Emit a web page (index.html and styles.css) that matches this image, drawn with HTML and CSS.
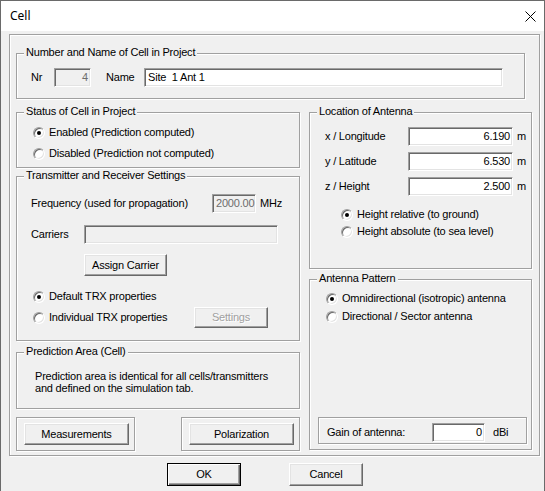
FILE: index.html
```html
<!DOCTYPE html>
<html>
<head>
<meta charset="utf-8">
<title>Cell</title>
<link rel="stylesheet" href="styles.css">
</head>
<body>
<div class="window">
  <div class="titlebar">
    <span class="title">Cell</span>
    <svg class="close" width="11" height="11" viewBox="0 0 11 11"><path d="M0.5 0.5 L10.5 10.5 M10.5 0.5 L0.5 10.5" stroke="#000" stroke-width="1" fill="none"/></svg>
  </div>
  <div class="client">
    <div class="frame">
      <div class="group g-name">
        <div class="legend">Number and Name of Cell in Project</div>
        <div class="row name-row">
          <span class="lbl lbl-nr">Nr</span>
          <div class="edit disabled num w-nr">4</div>
          <span class="lbl lbl-name">Name</span>
          <div class="edit w-name">Site  1 Ant 1</div>
        </div>
      </div>
      <div class="columns">
        <div class="col col-left">
          <div class="group g-status">
            <div class="legend">Status of Cell in Project</div>
            <div class="radio-row first"><span class="radio checked"></span><span class="rtext">Enabled (Prediction computed)</span></div>
            <div class="radio-row second"><span class="radio"></span><span class="rtext">Disabled (Prediction not computed)</span></div>
          </div>
          <div class="group g-trx">
            <div class="legend">Transmitter and Receiver Settings</div>
            <div class="row freq-row">
              <span class="lbl lbl-freq">Frequency (used for propagation)</span>
              <div class="edit disabled num w-freq">2000.00</div>
              <span class="unit unit-mhz">MHz</span>
            </div>
            <div class="row carriers-row">
              <span class="lbl lbl-carriers">Carriers</span>
              <div class="edit disabled w-carriers"></div>
            </div>
            <div class="btn btn-assign">Assign Carrier</div>
            <div class="radio-row trx-default"><span class="radio checked"></span><span class="rtext">Default TRX properties</span></div>
            <div class="radio-row trx-indiv">
              <span class="radio"></span><span class="rtext rtext-indiv">Individual TRX properties</span>
              <div class="btn btn-disabled btn-settings">Settings</div>
            </div>
          </div>
          <div class="group g-pred">
            <div class="legend">Prediction Area (Cell)</div>
            <div class="pred-text">Prediction area is identical for all cells/transmitters<br>and defined on the simulation tab.</div>
          </div>
          <div class="box-row">
            <div class="group small-box"><div class="btn btn-wide">Measurements</div></div>
            <div class="group small-box"><div class="btn btn-wide">Polarization</div></div>
          </div>
        </div>
        <div class="col col-right">
          <div class="group g-loc">
            <div class="legend">Location of Antenna</div>
            <div class="row loc-row first">
              <span class="lbl lbl-loc">x / Longitude</span>
              <div class="edit num w-loc">6.190</div>
              <span class="unit unit-m">m</span>
            </div>
            <div class="row loc-row">
              <span class="lbl lbl-loc">y / Latitude</span>
              <div class="edit num w-loc">6.530</div>
              <span class="unit unit-m">m</span>
            </div>
            <div class="row loc-row">
              <span class="lbl lbl-loc">z / Height</span>
              <div class="edit num w-loc">2.500</div>
              <span class="unit unit-m">m</span>
            </div>
            <div class="radio-row h-rel"><span class="radio checked"></span><span class="rtext">Height relative (to ground)</span></div>
            <div class="radio-row h-abs"><span class="radio"></span><span class="rtext">Height absolute (to sea level)</span></div>
          </div>
          <div class="group g-ant">
            <div class="legend">Antenna Pattern</div>
            <div class="radio-row ant-omni"><span class="radio checked"></span><span class="rtext">Omnidirectional (isotropic) antenna</span></div>
            <div class="radio-row ant-dir"><span class="radio"></span><span class="rtext">Directional / Sector antenna</span></div>
            <div class="group gain-box">
              <span class="lbl lbl-gain">Gain of antenna:</span>
              <div class="edit num w-gain">0</div>
              <span class="unit unit-dbi">dBi</span>
            </div>
          </div>
        </div>
      </div>
    </div>
    <div class="dlg-buttons">
      <div class="btn btn-default btn-dlg">OK</div>
      <div class="btn btn-dlg">Cancel</div>
    </div>
  </div>
</div>
</body>
</html>
```

FILE: styles.css
```css
* { box-sizing: border-box; }
html, body { margin: 0; padding: 0; background: #f0f0f0; }
body {
  font-family: "Liberation Sans", Arial, sans-serif;
  font-size: 11px;
  line-height: 13px;
  letter-spacing: -0.2px;
  color: #000;
}
.window {
  width: 545px;
  height: 491px;
  border-left: 1px solid #6a6a6a;
  border-right: 1px solid #6a6a6a;
  border-top: 1px solid #6a6a6a;
  background: #f0f0f0;
  overflow: hidden;
}
.titlebar {
  height: 30px;
  background: #fff;
  display: flex;
  align-items: center;
  padding: 0 8px 0 8px;
}
.title {
  font-family: "Segoe UI", "Noto Sans", "Liberation Sans", sans-serif;
  font-size: 12px;
  line-height: 16px;
  letter-spacing: 0;
  flex: 1;
  padding-left: 1px;
}
.close { display: block; }
.client {
  padding: 3px 0 0 8px;
}
.frame {
  width: 531px;
  height: 422px;
  border: 1px solid #a0a0a0;
  box-shadow: inset 1px 1px #fff, 1px 1px #fff;
  padding: 18px 0 0 6px;
}
.group {
  border: 1px solid #a0a0a0;
  box-shadow: inset 1px 1px #fff, 1px 1px #fff;
  display: flex;
  flex-direction: column;
}
.legend {
  align-self: flex-start;
  height: 13px;
  margin: -8px 0 0 7px;
  padding: 0 2px;
  background: #f0f0f0;
  white-space: nowrap;
}
.row { display: flex; align-items: center; height: 19px; }
.lbl { white-space: nowrap; flex: none; }
.unit { white-space: nowrap; }
.edit {
  height: 19px;
  border: 1px solid;
  border-color: #a0a0a0 #fff #fff #a0a0a0;
  box-shadow: inset 1px 1px #696969, inset -1px -1px #e3e3e3;
  background: #fff;
  padding: 0 2px 0 3px;
  line-height: 17px;
  white-space: pre;
  overflow: hidden;
  flex: none;
}
.edit.num { text-align: right; }
.edit.disabled { background: #f0f0f0; color: #6d6d6d; }

/* group 1 */
.g-name { width: 509px; height: 46px; }
.name-row { margin-top: 9px; padding-left: 14px; }
.lbl-nr { width: 23px; }
.w-nr { width: 37px; }
.lbl-name { width: 38px; margin-left: 15px; }
.w-name { width: 359px; }

.columns { display: flex; gap: 9px; margin-top: 13px; }
.col { display: flex; flex-direction: column; }
.col-left { width: 284px; }
.col-right { width: 223px; }

/* radios */
.radio-row { display: flex; align-items: center; height: 13px; padding-left: 16px; }
.radio {
  width: 12px; height: 12px; flex: none;
  border-radius: 50%;
  border: 1px solid;
  border-color: #a0a0a0 #fff #fff #a0a0a0;
  box-shadow: inset 1px 1px #696969, inset -1px -1px #e3e3e3;
  background: #fff;
  display: flex; align-items: center; justify-content: center;
}
.radio.checked::after {
  content: "";
  width: 4px; height: 4px;
  border-radius: 50%;
  background: #000;
}
.rtext { margin-left: 4px; white-space: nowrap; }

/* status */
.g-status { height: 56px; }
.g-status .first { margin-top: 8px; }
.g-status .second { margin-top: 8px; }

/* trx */
.g-trx { height: 165px; margin-top: 8px; }
.freq-row { margin-top: 12px; padding-left: 14px; }
.lbl-freq { width: 181px; }
.w-freq { width: 44px; }
.unit-mhz { margin-left: 4px; }
.carriers-row { margin-top: 12px; padding-left: 14px; }
.lbl-carriers { width: 53px; }
.w-carriers { width: 194px; }

.btn {
  display: flex; align-items: center; justify-content: center;
  border: 1px solid;
  border-color: #fff #696969 #696969 #fff;
  box-shadow: inset -1px -1px #a0a0a0, inset 1px 1px #e3e3e3;
  background: #f0f0f0;
  white-space: nowrap;
  flex: none;
}
.btn-assign { width: 83px; height: 22px; margin: 10px 0 0 67px; }
.trx-default { margin-top: 14px; }
.trx-indiv { margin-top: 4px; height: 21px; }
.rtext-indiv { width: 145px; }
.btn-settings { width: 74px; height: 21px; }
.btn-disabled { color: #a0a0a0; text-shadow: 1px 1px #fff; }

/* prediction */
.g-pred { height: 57px; margin-top: 11px; }
.pred-text { margin-top: 12px; padding-left: 18px; line-height: 12px; }

.box-row { display: flex; justify-content: space-between; margin-top: 8px; }
.small-box { width: 119px; height: 34px; }
.btn-wide { width: 105px; height: 22px; margin: 5px 0 0 7px; }

/* location */
.g-loc { height: 157px; }
.loc-row { margin-top: 6px; padding-left: 15px; }
.loc-row.first { margin-top: 9px; }
.lbl-loc { width: 83px; }
.w-loc { width: 105px; }
.unit-m { margin-left: 4px; }
.h-rel { margin-top: 12px; padding-left: 31px; }
.h-abs { margin-top: 4px; padding-left: 31px; }

/* antenna */
.g-ant { height: 171px; margin-top: 10px; }
.ant-omni { margin-top: 7px; }
.ant-dir { margin-top: 5px; }
.gain-box {
  margin: auto 0 5px 8px;
  width: 209px; height: 27px;
  flex-direction: row;
  align-items: flex-start;
  padding: 5px 0 0 8px;
}
.lbl-gain { width: 105px; line-height: 19px; }
.w-gain { width: 53px; }
.unit-dbi { margin-left: 8px; line-height: 19px; }

/* dialog buttons */
.dlg-buttons { display: flex; gap: 48px; margin: 7px 0 0 158px; }
.btn-dlg { width: 74px; height: 23px; }
.btn-default {
  border: 1px solid #000;
  box-shadow: inset 1px 1px #fff, inset -1px -1px #696969, inset -2px -2px #a0a0a0;
}
```
